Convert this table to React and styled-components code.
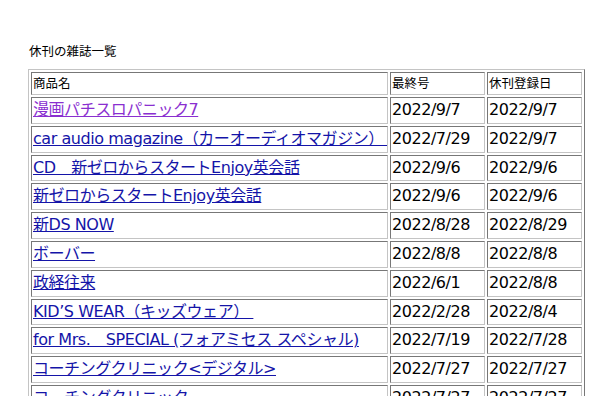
import React from 'react'
import styled, { createGlobalStyle } from 'styled-components'

const GlobalStyle = createGlobalStyle`
  body {
    margin: 0;
    background: #fff;
    color: #000;
    font-family: "DejaVu Sans", "Noto Sans CJK JP", sans-serif;
  }
`

const Page = styled.div`
  padding: 43px 0 0 28px;
`

const Title = styled.div`
  font-size: 12.5px;
  line-height: 17px;
  margin-bottom: 9px;
  padding-left: 1px;
`

const Table = styled.table`
  width: 557px;
  table-layout: fixed;
  border-collapse: separate;
  border-spacing: 2px;
  border: 1px solid;
  border-color: #c4c4c4 #777 #777 #c4c4c4;
`

const HeadCell = styled.td`
  box-sizing: border-box;
  width: ${p => p.$w}px;
  font-size: 12.5px;
  line-height: 19px;
  padding: 1px 1px;
  border: 1px solid;
  border-color: #777 #c4c4c4 #c4c4c4 #777;
  white-space: nowrap;
  overflow: hidden;
`

const Cell = styled.td`
  font-size: 16px;
  line-height: 22.8px;
  letter-spacing: -0.45px;
  padding: 1px;
  border: 1px solid;
  border-color: #777 #c4c4c4 #c4c4c4 #777;
  white-space: nowrap;
  overflow: hidden;
`

const Link = styled.a`
  color: ${p => (p.$visited ? '#8a2fd0' : '#1414a8')};
  text-decoration: underline;
`

const rows = [
  ['漫画パチスロパニック7', '2022/9/7', '2022/9/7', true],
  ['car audio magazine（カーオーディオマガジン）\u00a0', '2022/7/29', '2022/9/7'],
  ['CD　新ゼロからスタートEnjoy英会話', '2022/9/6', '2022/9/6'],
  ['新ゼロからスタートEnjoy英会話', '2022/9/6', '2022/9/6'],
  ['新DS NOW', '2022/8/28', '2022/8/29'],
  ['ボーバー', '2022/8/8', '2022/8/8'],
  ['政経往来', '2022/6/1', '2022/8/8'],
  ['KID’S WEAR（キッズウェア）\u00a0', '2022/2/28', '2022/8/4'],
  ['for Mrs.　SPECIAL (フォアミセス スペシャル)', '2022/7/19', '2022/7/28'],
  ['コーチングクリニック<デジタル>', '2022/7/27', '2022/7/27'],
  ['コーチングクリニック', '2022/7/27', '2022/7/27'],
  ['週刊ダイヤモンド', '2022/7/20', '2022/7/27'],
]

const App = () => (
  <Page>
    <GlobalStyle />
    <Title>休刊の雑誌一覧</Title>
    <Table>
      <tbody>
        <tr>
          <HeadCell $w={357}>商品名</HeadCell>
          <HeadCell $w={95}>最終号</HeadCell>
          <HeadCell $w={95}>休刊登録日</HeadCell>
        </tr>
        {rows.map(([name, last, reg, visited]) => (
          <tr key={name}>
            <Cell><Link href="#" $visited={visited}>{name}</Link></Cell>
            <Cell>{last}</Cell>
            <Cell>{reg}</Cell>
          </tr>
        ))}
      </tbody>
    </Table>
  </Page>
)

export default App
